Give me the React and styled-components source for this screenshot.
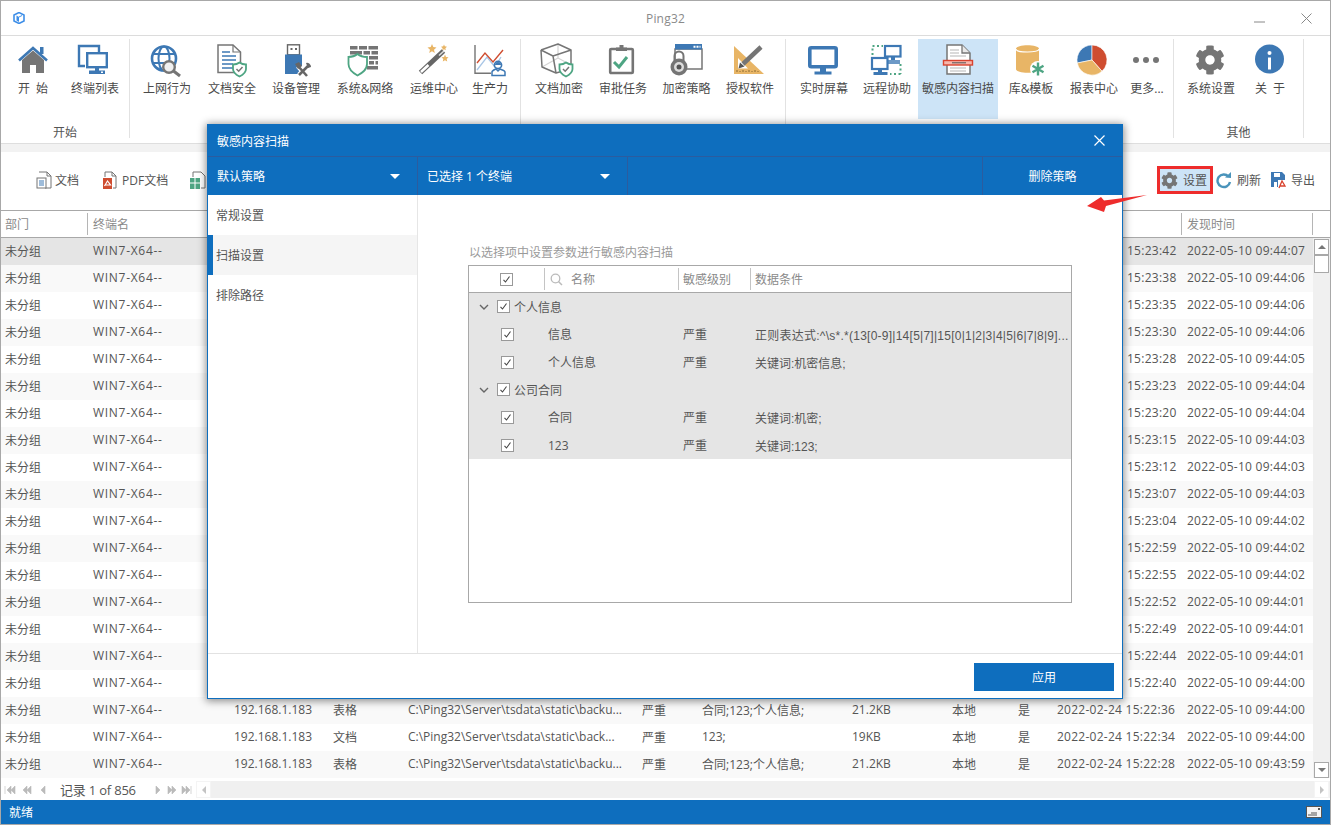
import React from 'react';
import styled, { createGlobalStyle } from 'styled-components';
import { FaCog } from 'react-icons/fa';

const BLUE = '#3d78b4';
const GRAY = '#757575';
const GREEN = '#4ea583';
const ORANGE = '#e8b566';
const RED = '#cf4d30';
const PRIMARY = '#0e6ebe';
const FONT = `"Open Sans", "Noto Sans CJK SC", sans-serif`;
const COLS = '87px 141px 99px 75px 234px 60px 150px 100px 66px 39px 130px 131px';

const Global = createGlobalStyle`
  html, body { margin: 0; padding: 0; background: #fff; }
  body { font-family: ${FONT}; font-size: 12px; color: #555; }
`;

const Window = styled.div`
  position: relative;
  width: 1331px;
  height: 825px;
  box-sizing: border-box;
  border: 1px solid #a8a8a8;
  display: flex;
  flex-direction: column;
  overflow: hidden;
  background: #fff;
`;
const TitleBar = styled.div`
  height: 35px;
  flex: none;
  box-sizing: border-box;
  border-bottom: 1px solid #dcdcdc;
  display: grid;
  grid-template-columns: 1fr auto 1fr;
  align-items: center;
  padding: 0 18px 0 12px;
`;
const TitleText = styled.div`
  color: #8a8a8a;
  font-size: 12px;
  margin-left: 6px;
  letter-spacing: .2px;
`;
const WinButtons = styled.div`
  display: flex;
  justify-content: flex-end;
  align-items: center;
  gap: 36px;
`;
const Ribbon = styled.div`
  height: 107px;
  flex: none;
  display: flex;
  padding-top: 3px;
  box-sizing: border-box;
  align-items: flex-start;
`;
const Group = styled.div`
  display: flex;
  flex-direction: column;
  height: 99px;
  width: ${p => p.$w}px;
  flex: none;
  box-sizing: border-box;
  border-right: 1px solid #e2e2e2;
  padding-left: ${p => p.$pad}px;
`;
const GroupItems = styled.div`
  display: flex;
  height: 80px;
  flex: none;
`;
const GroupLabel = styled.div`
  text-align: center;
  color: #555;
  padding-top: 5px;
  margin-left: -${p => p.$pad}px;
  line-height: 17px;
`;
const Item = styled.div`
  flex: none;
  width: ${p => p.$w}px;
  height: 80px;
  box-sizing: border-box;
  padding-top: 5px;
  display: flex;
  flex-direction: column;
  align-items: center;
  background: ${p => (p.$on ? '#cde4f7' : 'transparent')};
  color: #4a4a4a;
  white-space: pre;
`;
const ItemLabel = styled.span`
  margin-top: 4px;
  line-height: 17px;
`;
const IconBox = styled.svg`
  width: 32px;
  height: 32px;
  flex: none;
  overflow: visible;
  display: block;
`;
const Strip = styled.div`
  height: 8px;
  flex: none;
  background: #f2f2f2;
  border-top: 1px solid #dedede;
`;
const Toolbar = styled.div`
  height: 58px;
  flex: none;
  box-sizing: border-box;
  display: flex;
  align-items: center;
  justify-content: space-between;
  padding: 0 15px 2px 35px;
`;
const ToolGroup = styled.div`
  display: flex;
  align-items: center;
  gap: ${p => p.$gap}px;
`;
const Tool = styled.div`
  display: flex;
  align-items: center;
  gap: ${p => p.$gap || 3}px;
  color: #555;
`;
const HotTool = styled(Tool)`
  width: 56px;
  height: 28px;
  box-sizing: border-box;
  border: 3px solid #ee2c2c;
  background: #cde4f7;
  padding-left: 1px;
  gap: 5px;
  margin-right: -6px;
`;
const SmallIcon = styled.svg`
  width: 16px;
  height: 18px;
  flex: none;
  display: block;
`;
const HeadRow = styled.div`
  height: 28px;
  flex: none;
  box-sizing: border-box;
  display: grid;
  grid-template-columns: ${COLS};
  border-top: 1px solid #a8a8a8;
  border-bottom: 1px solid #a8a8a8;
  align-items: center;
  color: #8a8a8a;
`;
const HeadCell = styled.div`
  height: 22px;
  line-height: 24px;
  padding-left: 5px;
  border-right: 1px solid #b5b5b5;
  white-space: nowrap;
  &:first-child { padding-left: 4px; }
`;
const BodyWrap = styled.div`
  display: flex;
  height: 540px;
  flex: none;
`;
const Rows = styled.div`
  width: 1312px;
  flex: none;
`;
const Row = styled.div`
  height: 27px;
  display: grid;
  grid-template-columns: ${COLS};
  align-items: center;
  background: ${p => (p.$sel ? '#e5e5e5' : p.$alt ? '#f9f9f9' : '#fff')};
`;
const Cell = styled.div`
  padding: 0 0 2px ${p => p.$pl ?? 5}px;
  white-space: nowrap;
  overflow: hidden;
  color: #555;
  letter-spacing: ${p => p.$ls || 0}px;
  &:first-child { padding-left: 4px; }
`;
const VScroll = styled.div`
  flex: 1;
  background: #f0f0f0;
  display: flex;
  flex-direction: column;
  padding: 1px 1px 0 1px;
`;
const SBtn = styled.div`
  width: 15px;
  height: ${p => p.$h || 16}px;
  flex: none;
  box-sizing: border-box;
  border: 1px solid ${p => (p.$soft ? '#f4f4f4' : '#a8a8a8')};
  background: #fff;
  display: flex;
  align-items: center;
  justify-content: center;
  margin-top: ${p => (p.$auto ? 'auto' : '0')};
`;
const Arrow = styled.i`
  width: 0;
  height: 0;
  display: block;
  ${p => p.$dir === 'up' && 'border-left:4px solid transparent;border-right:4px solid transparent;border-bottom:4px solid #777;'}
  ${p => p.$dir === 'down' && 'border-left:4px solid transparent;border-right:4px solid transparent;border-top:4px solid #777;'}
  ${p => p.$dir === 'left' && 'border-top:4px solid transparent;border-bottom:4px solid transparent;border-right:4px solid #c4c4c4;'}
  ${p => p.$dir === 'right' && 'border-top:4px solid transparent;border-bottom:4px solid transparent;border-left:4px solid #c4c4c4;'}
`;
const HScroll = styled.div`
  height: 17px;
  flex: none;
  margin-top: 3px;
  display: flex;
  align-items: center;
`;
const Pager = styled.div`
  width: 195px;
  flex: none;
  box-sizing: border-box;
  display: flex;
  align-items: center;
  padding-left: 3px;
  color: #555;
`;
const PagerText = styled.span`
  margin: 0 15px 0 11px;
  white-space: nowrap;
  width: 78px;
  font-size: 13px;
  letter-spacing: -.2px;
`;
const NavIcon = styled.svg`
  width: 12px;
  height: 8px;
  flex: none;
  margin-right: ${p => p.$mr || 0}px;
  display: block;
`;
const Track = styled.div`
  flex: 1;
  height: 17px;
  background: #f0f0f0;
  display: flex;
  justify-content: space-between;
  padding-right: 1px;
`;
const Status = styled.div`
  height: 24px;
  flex: none;
  margin-top: 2px;
  background: ${PRIMARY};
  color: #fff;
  display: flex;
  align-items: center;
  justify-content: space-between;
  padding: 0 8px;
`;

const Dialog = styled.div`
  position: absolute;
  left: 206px;
  top: 123px;
  width: 916px;
  height: 575px;
  box-sizing: border-box;
  border: 1px solid ${PRIMARY};
  background: #fff;
  box-shadow: 0 1px 8px 1px rgba(0,0,0,.45);
  display: flex;
  flex-direction: column;
`;
const DialogTitle = styled.div`
  height: 32px;
  flex: none;
  box-sizing: border-box;
  background: ${PRIMARY};
  border-bottom: 1px solid #2b5c9f;
  color: #fff;
  display: flex;
  align-items: center;
  justify-content: space-between;
  padding: 0 17px 0 9px;
`;
const DialogBar = styled.div`
  height: 38px;
  flex: none;
  background: ${PRIMARY};
  color: #fff;
  display: flex;
`;
const BarCell = styled.div`
  width: ${p => p.$w}px;
  flex: ${p => (p.$grow ? 1 : 'none')};
  box-sizing: border-box;
  border-right: ${p => (p.$last ? 0 : '1px solid #2b5c9f')};
  display: flex;
  align-items: center;
  justify-content: ${p => (p.$center ? 'center' : 'space-between')};
  padding: 0 ${p => (p.$center ? '0' : '17px')} 0 ${p => (p.$center ? '0' : '9px')};
`;
const Caret = styled.i`
  display: block;
  width: 0;
  height: 0;
  border-left: 5px solid transparent;
  border-right: 5px solid transparent;
  border-top: 5px solid #fff;
`;
const DialogBody = styled.div`
  flex: 1;
  display: flex;
  min-height: 0;
`;
const Side = styled.div`
  width: 210px;
  flex: none;
  box-sizing: border-box;
  border-right: 1px solid #e6e6e6;
`;
const SideItem = styled.div`
  height: 40px;
  box-sizing: border-box;
  display: flex;
  align-items: center;
  padding-left: ${p => (p.$on ? '3px' : '8px')};
  border-left: ${p => (p.$on ? '5px solid ' + PRIMARY : '0')};
  background: ${p => (p.$on ? '#f5f5f5' : 'transparent')};
  color: #555;
`;
const Content = styled.div`
  flex: 1;
  padding: 49px 0 0 50px;
`;
const Caption = styled.div`
  color: #9a9a9a;
  line-height: 17px;
  margin-bottom: 4px;
  padding-left: 1px;
`;
const TreeBox = styled.div`
  width: 604px;
  height: 338px;
  box-sizing: border-box;
  border: 1px solid #a8a8a8;
`;
const TREE = '75px 134px 72px 1fr';
const TreeHead = styled.div`
  height: 27px;
  box-sizing: border-box;
  border-bottom: 1px solid #a8a8a8;
  display: grid;
  grid-template-columns: ${TREE};
  align-items: center;
  color: #8a8a8a;
`;
const TreeHeadCell = styled.div`
  height: 22px;
  display: flex;
  align-items: center;
  gap: ${p => p.$gap || 0}px;
  padding-left: ${p => p.$pl}px;
  border-left: ${p => (p.$nb ? 0 : '1px solid #c4c4c4')};
`;
const TreeBody = styled.div`
  background: #e5e5e5;
  height: 166px;
  display: grid;
  grid-auto-rows: 1fr;
`;
const GroupRow = styled.div`
  display: flex;
  align-items: center;
  padding-left: 10px;
  color: #555;
`;
const GroupName = styled.span`
  margin-left: 4px;
`;
const ChildRow = styled.div`
  display: grid;
  grid-template-columns: ${TREE};
  align-items: center;
  color: #555;
`;
const ChildCell = styled.div`
  padding-left: ${p => p.$pl}px;
  white-space: nowrap;
  overflow: hidden;
`;
const CondCell = styled(ChildCell)`
  font-family: "Liberation Sans", "Noto Sans CJK SC", sans-serif;
  letter-spacing: ${p => p.$ls || 0}px;
`;
const Box = styled.span`
  width: 13px;
  height: 13px;
  flex: none;
  box-sizing: border-box;
  border: 1px solid #999;
  background: #fff;
  display: flex;
  align-items: center;
  justify-content: center;
  margin-left: ${p => p.$ml || 0}px;
`;
const DialogFoot = styled.div`
  height: 45px;
  flex: none;
  box-sizing: border-box;
  border-top: 1px solid #e2e2e2;
  display: flex;
  justify-content: flex-end;
  padding: 9px 8px 0 0;
`;
const ApplyBtn = styled.div`
  width: 140px;
  height: 28px;
  background: ${PRIMARY};
  color: #fff;
  display: flex;
  align-items: center;
  justify-content: center;
`;
const Pointer = styled.svg`
  position: absolute;
  left: 1084px;
  top: 192px;
  width: 64px;
  height: 22px;
`;

const Shield = ({ x, y, s = 1 }) => (
  <g transform={`translate(${x} ${y}) scale(${s})`}>
    <path d="M0-6.5C2-5 4-4.5 6.5-4.5V0C6.5 4 3 6 0 7.5-3 6-6.5 4-6.5 0V-4.5C-4-4.5-2-5 0-6.5Z" fill="#fff" stroke={GREEN} strokeWidth="1.8" />
    <path d="M-3 0-.8 2.2 3-2" fill="none" stroke={GRAY} strokeWidth="1.5" />
  </g>
);

const ICONS = {
  home: <>
    <path d="M5 16 16 6.5 27 16V29H19V21H13V29H5Z" fill={GRAY} />
    <path d="M2 16.500 16 4 30 16.500" fill="none" stroke={BLUE} strokeWidth="2.600" />
    <rect x="23" y="3" width="3.500" height="7" fill={BLUE} />
  </>,
  terminals: <>
    <path d="M6 22H0V2H20V8" fill="none" stroke={BLUE} strokeWidth="2.400" />
    <rect x="8.200" y="9.200" width="19.600" height="14" fill="#fff" stroke={BLUE} strokeWidth="2.400" />
    <rect x="16" y="24" width="4" height="3" fill={BLUE} />
    <rect x="10" y="26.500" width="16" height="3.500" fill={BLUE} />
    <rect x="22" y="27.500" width="2" height="1.500" fill="#fff" />
  </>,
  globe: <>
    <circle cx="13" cy="14.500" r="12" fill="none" stroke={BLUE} strokeWidth="2.600" />
    <ellipse cx="13" cy="14.500" rx="5.500" ry="12" fill="none" stroke={BLUE} strokeWidth="2" />
    <path d="M1 10H25M1 19H25" stroke={BLUE} strokeWidth="2" />
    <circle cx="18" cy="23" r="5.800" fill="#f0f0f0" stroke={GRAY} strokeWidth="2.400" />
    <path d="M22.500 27 29 32" stroke={GRAY} strokeWidth="3" />
  </>,
  docSafe: <>
    <path d="M2 1H17L24.500 8V28.500H2Z" fill="#fff" stroke={GRAY} strokeWidth="1.500" />
    <path d="M17 1V8H24.500" fill="none" stroke={GRAY} strokeWidth="1.200" />
    <path d="M6 8H14M6 12H20M6 16H20M6 20H17M6 24H17" stroke={BLUE} strokeWidth="1.500" />
    <Shield x={23.500} y={25} />
  </>,
  usb: <>
    <rect x="7.500" y=".8" width="12" height="10" fill="#fff" stroke="#666" strokeWidth="1.400" />
    <rect x="10.500" y="4" width="2" height="2" fill="#666" />
    <rect x="15" y="4" width="2" height="2" fill="#666" />
    <rect x="5" y="10.500" width="17" height="19.500" fill={BLUE} />
    <path d="M18 22 27 32M28 22 19 31" stroke="#fff" strokeWidth="5" />
    <path d="M18 22 27 32M28 22 19 31" stroke="#666" strokeWidth="2.600" />
    <path d="M15 20 19 18 22 22 18 25Z" fill="#666" />
    <path d="M26 19a4 4 0 0 1 5 4l-3 1Z" fill="#666" />
  </>,
  firewall: <>
    <path d="M1 2H8.500V5.500H1ZM10 2H18V5.500H10ZM19.500 2H29V5.500H19.500ZM1 7H13V10.500H1ZM14.500 7H21V10.500H14.500ZM22.500 7H29V10.500H22.500ZM20 12H29V15.500H20ZM20 17H25V20.500H20ZM26.500 17H29V20.500H26.500ZM18 22H29V25.500H18Z" fill={GRAY} />
    <path d="M8.500 10C11 12 15 13 18 13V20C18 26 13 29 8.500 31.500 4 29-.5 26-.5 20V13C2 13 6 12 8.500 10Z" fill="#fff" stroke={GREEN} strokeWidth="1.800" />
  </>,
  wand: <>
    <path d="M2.500 28.500 25.500 7" stroke="#666" strokeWidth="5" />
    <path d="M3 28 10.500 21" stroke="#fff" strokeWidth="2.600" />
    <path d="M21 11.500 26 7" stroke="#ddd" strokeWidth="1.500" />
    <path d="M14 0 15.300 3 18.500 3.500 16 5.800 16.800 9 14 7.300 11.200 9 12 5.800 9.500 3.500 12.700 3Z" fill={ORANGE} />
    <path d="M26 .5 26.800 2.300 29 2.700 27.400 4.200 27.800 6.300 26 5.200 24.200 6.300 24.600 4.200 23 2.700 25.200 2.300Z" fill={ORANGE} />
    <path d="M27 10.500 28 13 30.500 13.300 28.700 15 29.200 17.500 27 16.200 24.800 17.500 25.300 15 23.500 13.300 26 13Z" fill={ORANGE} />
  </>,
  chart: <>
    <path d="M1 1V29.300H17" fill="none" stroke={GRAY} strokeWidth="1.400" />
    <path d="M3 26 13 13 21 23 27 13" fill="none" stroke="#a9c6e6" strokeWidth="1.300" />
    <path d="M3 19 11 9 19 18 29 6" fill="none" stroke={RED} strokeWidth="1.400" />
    <circle cx="24" cy="21" r="3.600" fill="#fff" stroke={BLUE} strokeWidth="1.600" />
    <path d="M24 18a3 3 0 0 0-3 3h6a3 3 0 0 0-3-3Z" fill={BLUE} />
    <path d="M18 31.500V28C18 26.500 21 25.500 22 25L24 27 26 25C27 25.500 31 26.500 31 28V31.500Z" fill="#fff" stroke={BLUE} strokeWidth="1.500" />
  </>,
  cube: <>
    <path d="M15 14-1 23M15 14 28 21M15 0 15 14" fill="none" stroke="#d4d4d4" strokeWidth="1.200" />
    <path d="M-2 6 15 0 28 6V21M-2 6 10 12 28 6M10 12 13 29-1 23-2 6M13 29 20 27" fill="none" stroke={GRAY} strokeWidth="1.500" strokeLinejoin="round" />
    <Shield x={23} y={25} />
  </>,
  clip: <>
    <rect x="3.200" y="5" width="22.600" height="24" rx="1" fill="#fff" stroke={GRAY} strokeWidth="2.600" />
    <path d="M9 7V3.500H12.500V1H16.500V3.500H20V7Z" fill={GRAY} />
    <path d="M7 18 12 23 20 13" fill="none" stroke={GREEN} strokeWidth="3" />
  </>,
  policy: <>
    <path d="M12 25H31V5H4V16" fill="#fff" stroke={GRAY} strokeWidth="1.500" />
    <rect x="4" y="0" width="27" height="5.500" fill={BLUE} />
    <path d="M22.500 2.700H24.500M25.500 2.700H27.500M28.500 2.700H29.500" stroke="#fff" strokeWidth="2" />
    <path d="M3.500 18V12a4.500 4.500 0 0 1 9 0V18" fill="none" stroke={GRAY} strokeWidth="2" />
    <circle cx="8" cy="23" r="8.500" fill={GRAY} />
    <circle cx="8" cy="23" r="5" fill="#ddd" />
    <circle cx="8" cy="23" r="2.500" fill="#555" />
  </>,
  license: <>
    <path d="M0 2 30 30H0Z" fill={ORANGE} />
    <path d="M4 14 14 24.500H4Z" fill="#fff" />
    <path d="M3 28V26M6 28V27M9 28V26M12 28V27M15 28V26M18 28V27M21 28V26M24 28V27" stroke="#8a6a30" strokeWidth="1" />
    <path d="M9 20 27 3" stroke={GRAY} strokeWidth="4.500" />
    <path d="M4.500 24.500 6 18.500 10.500 22.500Z" fill="#555" />
  </>,
  monitor: <>
    <rect x="1.800" y="3.800" width="26.400" height="19" rx="1.500" fill="#fff" stroke={BLUE} strokeWidth="3.600" />
    <rect x="12" y="24" width="6" height="4" fill={BLUE} />
    <rect x="6.500" y="27.500" width="17" height="3" fill={BLUE} />
  </>,
  remote: <>
    <rect x="14" y="2" width="15.500" height="10.500" fill="#fff" stroke={BLUE} strokeWidth="2.200" />
    <rect x="20" y="13" width="4" height="3" fill={BLUE} />
    <path d="M17 17H29M17 19H29" stroke={BLUE} strokeWidth="1.300" />
    <rect x="1" y="14" width="15.500" height="11" fill="#fff" stroke={BLUE} strokeWidth="2.200" />
    <rect x="7" y="26" width="4" height="2" fill={BLUE} />
    <rect x="2.500" y="28" width="14" height="3" fill={BLUE} />
    <path d="M1.500 11V3M1.500 2H12" fill="none" stroke={GREEN} strokeWidth="2" strokeDasharray="2 2.500" />
    <path d="M29.500 20V30M29.500 30H19" fill="none" stroke={GREEN} strokeWidth="2" strokeDasharray="2 2.500" />
  </>,
  scan: <>
    <path d="M5 1H20L28 9V30H5Z" fill="#fff" stroke={GRAY} strokeWidth="1.500" />
    <path d="M20 1V9H28" fill="#e8e8e8" stroke={GRAY} strokeWidth="1.300" />
    <path d="M8 6H17M8 9H17M8 12H24M8 24H24M8 27H24" stroke="#b5b5b5" strokeWidth="1.200" />
    <rect x="1.500" y="16.500" width="29" height="4.500" fill="#f6b7ad" stroke="#d9432f" strokeWidth="1.400" />
    <path d="M10 18.800H24" stroke="#555" strokeWidth="1" />
  </>,
  db: <>
    <path d="M1 5C1 0 24 0 24 5V25C24 30 1 30 1 25Z" fill={ORANGE} />
    <path d="M1 5C1 9 24 9 24 5" fill="none" stroke="#fff" strokeWidth="1.200" />
    <circle cx="23" cy="25" r="8" fill="#fff" />
    <path d="M23 18.500V31.500M17.500 21.800 28.500 28.200M28.500 21.800 17.500 28.200" stroke={GREEN} strokeWidth="2.400" />
  </>,
  pie: <>
    <path d="M14 16 14 1A15 15 0 0 0-.7 19Z" fill={BLUE} stroke="#fff" strokeWidth=".6" />
    <path d="M14 16 14 1A15 15 0 0 1 24 27.200Z" fill={RED} stroke="#fff" strokeWidth=".6" />
    <path d="M14 16 24 27.200A15 15 0 0 1-.7 19Z" fill={ORANGE} stroke="#fff" strokeWidth=".6" />
  </>,
  more: <>
    <circle cx="5" cy="16" r="3" fill={GRAY} />
    <circle cx="15" cy="16" r="3" fill={GRAY} />
    <circle cx="25" cy="16" r="3" fill={GRAY} />
  </>,
  info: <>
    <circle cx="15.500" cy="15" r="14.500" fill={BLUE} />
    <rect x="14" y="13.500" width="3" height="12" fill="#fff" />
    <circle cx="15.500" cy="9" r="2" fill="#fff" />
  </>,
};

const Glyph = ({ name }) => {
  if (name === 'gear') {
    return <FaCog size={30} color={GRAY} style={{ flex: 'none', margin: '1px 2px 1px 0', display: 'block' }} />;
  }
  return <IconBox viewBox="0 0 32 32">{ICONS[name]}</IconBox>;
};

const GROUPS = [
  { w: 129, pad: 0, label: '开始', items: [
    ['home', '开  始', 64], ['terminals', '终端列表', 60] ] },
  { w: 391, pad: 5, items: [
    ['globe', '上网行为', 64], ['docSafe', '文档安全', 66], ['usb', '设备管理', 62],
    ['firewall', '系统&网络', 76], ['wand', '运维中心', 62], ['chart', '生产力', 50] ] },
  { w: 265, pad: 6, items: [
    ['cube', '文档加密', 64], ['clip', '审批任务', 64], ['policy', '加密策略', 63], ['license', '授权软件', 64] ] },
  { w: 388, pad: 6, items: [
    ['monitor', '实时屏幕', 64], ['remote', '远程协助', 62], ['scan', '敏感内容扫描', 80, true],
    ['db', '库&模板', 66], ['pie', '报表中心', 60], ['more', '更多...', 46] ] },
  { w: 130, pad: 6, label: '其他', items: [
    ['gear', '系统设置', 62], ['info', '关  于', 56] ] },
];

const DocIcon = () => (
  <SmallIcon viewBox="0 0 16 18">
    <path d="M3 1H11L15 5V17H9" fill="none" stroke={GRAY} strokeWidth="1" />
    <path d="M11 1V5H15" fill="none" stroke={GRAY} strokeWidth="1" />
    <rect x="1" y="7" width="9" height="10" fill="#fff" stroke={GRAY} strokeWidth="1" />
    <path d="M3 10H8M3 12H8M3 14H8" stroke={BLUE} strokeWidth="1" />
  </SmallIcon>
);
const PdfIcon = () => (
  <SmallIcon viewBox="0 0 16 18">
    <path d="M4 6V1H11L15 5V17H12" fill="none" stroke={GRAY} strokeWidth="1" />
    <path d="M11 1V5H15" fill="none" stroke={GRAY} strokeWidth="1" />
    <rect x="2" y="7" width="9" height="11" fill={RED} />
    <path d="M3.500 15 6.500 10 9.500 14H4.500" fill="none" stroke="#fff" strokeWidth="1.200" />
  </SmallIcon>
);
const ExcelIcon = () => (
  <SmallIcon viewBox="0 0 16 18">
    <path d="M3 6V1H11L15 5V17H11" fill="none" stroke={GRAY} strokeWidth="1" />
    <rect x="0" y="7" width="10" height="11" fill={GREEN} />
    <path d="M0 12H10M5 7V18" stroke="#fff" strokeWidth="1" />
  </SmallIcon>
);
const RefreshIcon = () => (
  <SmallIcon viewBox="0 0 16 18">
    <path d="M12.500 5.500A6.300 6.300 0 1 0 14 11" fill="none" stroke="#4a94bb" strokeWidth="2.400" />
    <path d="M9 6.500 15 7V1Z" fill="#4a94bb" />
  </SmallIcon>
);
const ExportIcon = () => (
  <SmallIcon viewBox="0 0 16 18">
    <path d="M1 1H12L15 4V9H8V16H1Z" fill={BLUE} />
    <rect x="4" y="2" width="6" height="4" fill="#fff" />
    <rect x="4" y="11" width="3" height="5" fill="#fff" />
    <path d="M9 17 12 10 15 15H9.500" fill="none" stroke="#d9432f" strokeWidth="1.300" />
  </SmallIcon>
);

const Check = () => (
  <svg width="9" height="9" viewBox="0 0 9 9" style={{ display: 'block' }}>
    <path d="M1.500 4.800 3.500 7 7.500 1.500" fill="none" stroke="#444" strokeWidth="1.100" />
  </svg>
);
const Chevron = () => (
  <svg width="10" height="6" viewBox="0 0 10 6" style={{ flex: 'none', marginRight: 8, display: 'block' }}>
    <path d="M1 1 5 5 9 1" fill="none" stroke="#666" strokeWidth="1.400" />
  </svg>
);

const NAV = {
  first: 'M1 0V8M7 0 3 4 7 8ZM11 0 7 4 11 8Z',
  prev: 'M6 0 2 4 6 8ZM10 0 6 4 10 8Z',
  one: 'M8 0 4 4 8 8Z',
  next: 'M3 0 7 4 3 8Z',
  fwd: 'M2 0 6 4 2 8ZM6 0 10 4 6 8Z',
  last: 'M1 0 5 4 1 8ZM5 0 9 4 5 8ZM10 0V8',
};
const Nav = ({ d, mr, color = '#bbb' }) => (
  <NavIcon viewBox="0 0 12 8" $mr={mr}>
    <path d={d} fill={color} stroke={color} strokeWidth=".6" />
  </NavIcon>
);

const MADE = ['15:23:42','15:23:38','15:23:35','15:23:30','15:23:28','15:23:23','15:23:20','15:23:15','15:23:12','15:23:07','15:23:04','15:22:59','15:22:55','15:22:52','15:22:49','15:22:44','15:22:40','15:22:36','15:22:34','15:22:28'];
const FOUND = ['09:44:07','09:44:06','09:44:06','09:44:06','09:44:05','09:44:04','09:44:04','09:44:03','09:44:03','09:44:03','09:44:02','09:44:02','09:44:02','09:44:01','09:44:01','09:44:01','09:44:00','09:44:00','09:44:00','09:43:59'];
const COVERED = 17; // rows whose middle columns lie behind the dialog
const TIME_LS = 0.26;
const NAME_LS = 0.7;

const TREE_ROWS = [
  { group: '个人信息' },
  { name: '信息', ls: 0.25, cond: '正则表达式:^\\s*.*(13[0-9]|14[5|7]|15[0|1|2|3|4|5|6|7|8|9]...' },
  { name: '个人信息', cond: '关键词:机密信息;' },
  { group: '公司合同' },
  { name: '合同', cond: '关键词:机密;' },
  { name: '123', cond: '关键词:123;' },
];

const FullRow = ({ i }) => {
  const doc = i === 18;
  return (
    <Row $alt={i % 2 === 1}>
      <Cell>未分组</Cell>
      <Cell $ls={NAME_LS}>WIN7-X64--</Cell>
      <Cell>192.168.1.183</Cell>
      <Cell>{doc ? '文档' : '表格'}</Cell>
      <Cell>{doc ? 'C:\\Ping32\\Server\\tsdata\\static\\back...' : 'C:\\Ping32\\Server\\tsdata\\static\\backu...'}</Cell>
      <Cell>严重</Cell>
      <Cell>{doc ? '123;' : '合同;123;个人信息;'}</Cell>
      <Cell>{doc ? '19KB' : '21.2KB'}</Cell>
      <Cell>本地</Cell>
      <Cell>是</Cell>
      <Cell $ls={TIME_LS}>2022-02-24 {MADE[i]}</Cell>
      <Cell $ls={TIME_LS}>2022-05-10 {FOUND[i]}</Cell>
    </Row>
  );
};

const CoveredRow = ({ i }) => (
  <Row $sel={i === 0} $alt={i % 2 === 1}>
    <Cell>未分组</Cell>
    <Cell $ls={NAME_LS}>WIN7-X64--</Cell>
    <Cell /><Cell /><Cell /><Cell /><Cell /><Cell /><Cell /><Cell />
    <Cell $pl={75} $ls={TIME_LS}>{MADE[i]}</Cell>
    <Cell $ls={TIME_LS}>2022-05-10 {FOUND[i]}</Cell>
  </Row>
);

export default function App() {
  return (
    <>
      <Global />
      <Window>
        <TitleBar>
          <svg width="12" height="12" viewBox="0 0 12 12" style={{ display: 'block' }}>
            <path d="M6 .5 11 3V9L6 11.500 1 9V3Z" fill="#fff" stroke="#3f8fe8" strokeWidth="1.600" />
            <path d="M3.500 3.500V8.500L6 10V5Z" fill="#3f8fe8" />
            <path d="M6 5 9 3.500" stroke="#3f8fe8" strokeWidth="1" />
          </svg>
          <TitleText>Ping32</TitleText>
          <WinButtons>
            <svg width="11" height="2" viewBox="0 0 11 2" style={{ display: 'block', marginTop: 8 }}><path d="M0 1H11" stroke="#888" strokeWidth="1" /></svg>
            <svg width="11" height="11" viewBox="0 0 11 11" style={{ display: 'block' }}><path d="M.5.5 10.500 10.500M10.500.5.5 10.500" stroke="#888" strokeWidth="1" /></svg>
          </WinButtons>
        </TitleBar>
        <Ribbon>
          {GROUPS.map((g, i) => (
            <Group key={i} $w={g.w} $pad={g.pad}>
              <GroupItems>
                {g.items.map(([icon, label, w, on]) => (
                  <Item key={label} $w={w} $on={on}>
                    <Glyph name={icon} />
                    <ItemLabel>{label}</ItemLabel>
                  </Item>
                ))}
              </GroupItems>
              {g.label && <GroupLabel $pad={g.pad}>{g.label}</GroupLabel>}
            </Group>
          ))}
        </Ribbon>
        <Strip />
        <Toolbar>
          <ToolGroup $gap={22}>
            <Tool><DocIcon />文档</Tool>
            <Tool $gap={5}><PdfIcon />PDF文档</Tool>
            <ExcelIcon />
          </ToolGroup>
          <ToolGroup $gap={9}>
            <HotTool><FaCog size={17} color={GRAY} style={{ flex: 'none' }} />设置</HotTool>
            <Tool $gap={5}><RefreshIcon />刷新</Tool>
            <Tool $gap={5}><ExportIcon />导出</Tool>
          </ToolGroup>
        </Toolbar>
        <HeadRow>
          <HeadCell>部门</HeadCell>
          <HeadCell>终端名</HeadCell>
          <span /><span /><span /><span /><span /><span /><span /><span /><HeadCell />
          <HeadCell>发现时间</HeadCell>
        </HeadRow>
        <BodyWrap>
          <Rows>
            {MADE.map((t, i) => (i < COVERED ? <CoveredRow key={t} i={i} /> : <FullRow key={t} i={i} />))}
          </Rows>
          <VScroll>
            <SBtn><Arrow $dir="up" /></SBtn>
            <SBtn $h={18} />
            <SBtn $auto><Arrow $dir="down" /></SBtn>
          </VScroll>
        </BodyWrap>
        <HScroll>
          <Pager>
            <Nav d={NAV.first} mr={5} />
            <Nav d={NAV.prev} mr={4} />
            <Nav d={NAV.one} />
            <PagerText>记录 1 of 856</PagerText>
            <Nav d={NAV.next} mr={1} />
            <Nav d={NAV.fwd} mr={3} />
            <Nav d={NAV.last} />
          </Pager>
          <SBtn $h={17} $soft><Arrow $dir="left" /></SBtn>
          <Track>
            <span />
            <SBtn $h={17} $soft><Arrow $dir="right" /></SBtn>
          </Track>
        </HScroll>
        <Status>
          <span>就绪</span>
          <svg width="16" height="12" viewBox="0 0 16 12" style={{ display: 'block' }}>
            <rect x=".5" y=".5" width="15" height="11" fill="#f4f4f4" stroke="#555" />
            <path d="M2 9H11M5 7H11" stroke="#555" strokeWidth="1" />
            <rect x="12" y="2" width="2" height="2" fill="#555" />
          </svg>
        </Status>

        <Dialog>
          <DialogTitle>
            <span>敏感内容扫描</span>
            <svg width="11" height="11" viewBox="0 0 11 11" style={{ display: 'block' }}><path d="M.5.5 10.500 10.500M10.500.5.5 10.500" stroke="#fff" strokeWidth="1.200" /></svg>
          </DialogTitle>
          <DialogBar>
            <BarCell $w={210}>默认策略<Caret /></BarCell>
            <BarCell $w={210}>已选择 1 个终端<Caret /></BarCell>
            <BarCell $grow />
            <BarCell $w={139} $center $last>删除策略</BarCell>
          </DialogBar>
          <DialogBody>
            <Side>
              <SideItem>常规设置</SideItem>
              <SideItem $on>扫描设置</SideItem>
              <SideItem>排除路径</SideItem>
            </Side>
            <Content>
              <Caption>以选择项中设置参数进行敏感内容扫描</Caption>
              <TreeBox>
                <TreeHead>
                  <TreeHeadCell $nb $pl={31}><Box><Check /></Box></TreeHeadCell>
                  <TreeHeadCell $pl={5} $gap={8}>
                    <svg width="13" height="13" viewBox="0 0 13 13" style={{ display: 'block' }}>
                      <circle cx="5.500" cy="5.500" r="4.300" fill="none" stroke="#bbb" strokeWidth="1.300" />
                      <path d="M8.500 8.500 12 12" stroke="#bbb" strokeWidth="1.500" />
                    </svg>
                    名称
                  </TreeHeadCell>
                  <TreeHeadCell $pl={4}>敏感级别</TreeHeadCell>
                  <TreeHeadCell $pl={4}>数据条件</TreeHeadCell>
                </TreeHead>
                <TreeBody>
                  {TREE_ROWS.map((r, i) => r.group ? (
                    <GroupRow key={i}>
                      <Chevron />
                      <Box><Check /></Box>
                      <GroupName>{r.group}</GroupName>
                    </GroupRow>
                  ) : (
                    <ChildRow key={i}>
                      <ChildCell $pl={0}><Box $ml={32}><Check /></Box></ChildCell>
                      <ChildCell $pl={4}>{r.name}</ChildCell>
                      <ChildCell $pl={5}>严重</ChildCell>
                      <CondCell $pl={5} $ls={r.ls}>{r.cond}</CondCell>
                    </ChildRow>
                  ))}
                </TreeBody>
              </TreeBox>
            </Content>
          </DialogBody>
          <DialogFoot>
            <ApplyBtn>应用</ApplyBtn>
          </DialogFoot>
        </Dialog>
        <Pointer viewBox="1085 193 64 22">
          <path d="M1087 206 1101 197 1104 200.500 1147 195 1106 206 1104 212Z" fill="#ee2c2c" />
        </Pointer>
      </Window>
    </>
  );
}
